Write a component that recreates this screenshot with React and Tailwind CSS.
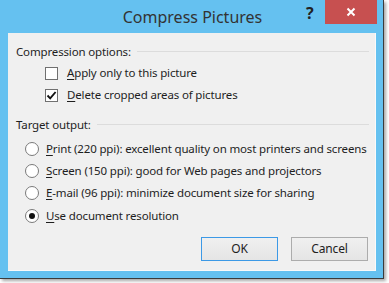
import React from "react";

const font = { fontFamily: "'Noto Sans', 'Open Sans', sans-serif" };

const Check = ({ checked }) => (
  <span className="w-[13px] h-[13px] border border-[#707070] bg-white flex items-center justify-center shrink-0">
    {checked && (
      <svg width="11" height="11" viewBox="0 0 11 11">
        <path d="M1.5 5.5 L4.2 8.3 L9.6 2" fill="none" stroke="#111" strokeWidth="1.9" />
      </svg>
    )}
  </span>
);

const Radio = ({ checked }) => (
  <span className="w-[14px] h-[14px] rounded-full border border-[#7a7a7a] bg-white flex items-center justify-center shrink-0">
    {checked && <span className="w-[6px] h-[6px] rounded-full bg-[#111]" />}
  </span>
);

const SectionHead = ({ children, className }) => (
  <div className={`flex items-center h-[16px] ${className}`}>
    <span className="whitespace-nowrap">{children}</span>
    <div className="flex-1 h-px bg-[#dcdcdc] ml-[6px] mb-[2px]" />
  </div>
);

const CheckRow = ({ checked, hot, rest }) => (
  <div className="flex items-center h-[22px] pl-[37px] gap-[9px]">
    <Check checked={checked} />
    <span className="whitespace-nowrap">
      <u className="underline-offset-2">{hot}</u>
      {rest}
    </span>
  </div>
);

const RadioRow = ({ checked, hot, rest, className = "" }) => (
  <div className={`flex items-center h-[22px] pl-[17px] gap-[7px] ${className}`}>
    <Radio checked={checked} />
    <span className="whitespace-nowrap">
      <u className="underline-offset-2">{hot}</u>
      {rest}
    </span>
  </div>
);

export default function App() {
  return (
    <div className="w-[389px] h-[283px] bg-white overflow-hidden" style={font}>
      <div className="w-[384px] h-[279px] bg-[#65c1f0] border-r border-b border-[#3b3b3b] flex flex-col shadow-[2px_2px_3px_rgba(0,0,0,0.35)]">
        {/* Title bar */}
        <div className="h-[33px] relative flex justify-center shrink-0">
          <span className="text-[16px] text-[#333] leading-[20px] pt-[7px] pl-[2px]">Compress Pictures</span>
          <span className="absolute left-[306px] top-[2px] text-[16px] font-bold text-[#222] leading-[22px]">?</span>
          <div className="absolute left-[325px] top-0 w-[52px] h-[24px] bg-[#c75050] flex items-center justify-center">
            <svg width="10" height="10" viewBox="0 0 10 10">
              <path d="M1.5 1.5 L8.5 8.5 M8.5 1.5 L1.5 8.5" stroke="#fff" strokeWidth="2" />
            </svg>
          </div>
        </div>

        {/* Client area */}
        <div className="ml-[8px] w-[368px] h-[238px] bg-[#f0f0f0] border-r border-b border-[#fafafa] flex flex-col text-[11.5px] tracking-[-0.15px] text-[#1e1e1e] leading-[16px] pl-[8px] pr-[6px]">
          <SectionHead className="mt-[11px]">Compression options:</SectionHead>
          <div className="flex flex-col mt-[2px] -ml-[8px]">
            <CheckRow checked={false} hot="A" rest="pply only to this picture" />
            <CheckRow checked={true} hot="D" rest="elete cropped areas of pictures" />
          </div>
          <SectionHead className="mt-[11px]">Target output:</SectionHead>
          <div className="flex flex-col mt-[5px] -ml-[8px]">
            <RadioRow hot="P" rest="rint (220 ppi): excellent quality on most printers and screens" />
            <RadioRow hot="S" rest="creen (150 ppi): good for Web pages and projectors" />
            <RadioRow hot="E" rest="-mail (96 ppi): minimize document size for sharing" />
            <RadioRow checked hot="U" rest="se document resolution" className="mt-[1px]" />
          </div>
          <div className="flex justify-end gap-[13px] mt-[10px] pr-[1px]">
            <button className="w-[77px] h-[24px] border border-[#3c99e6] bg-[linear-gradient(#f0f0f0,#e5e5e5)] text-[12px] text-[#1e1e1e]">
              OK
            </button>
            <button className="w-[77px] h-[24px] border border-[#acacac] bg-[linear-gradient(#f0f0f0,#e5e5e5)] text-[12px] text-[#1e1e1e]">
              Cancel
            </button>
          </div>
        </div>
      </div>
    </div>
  );
}
